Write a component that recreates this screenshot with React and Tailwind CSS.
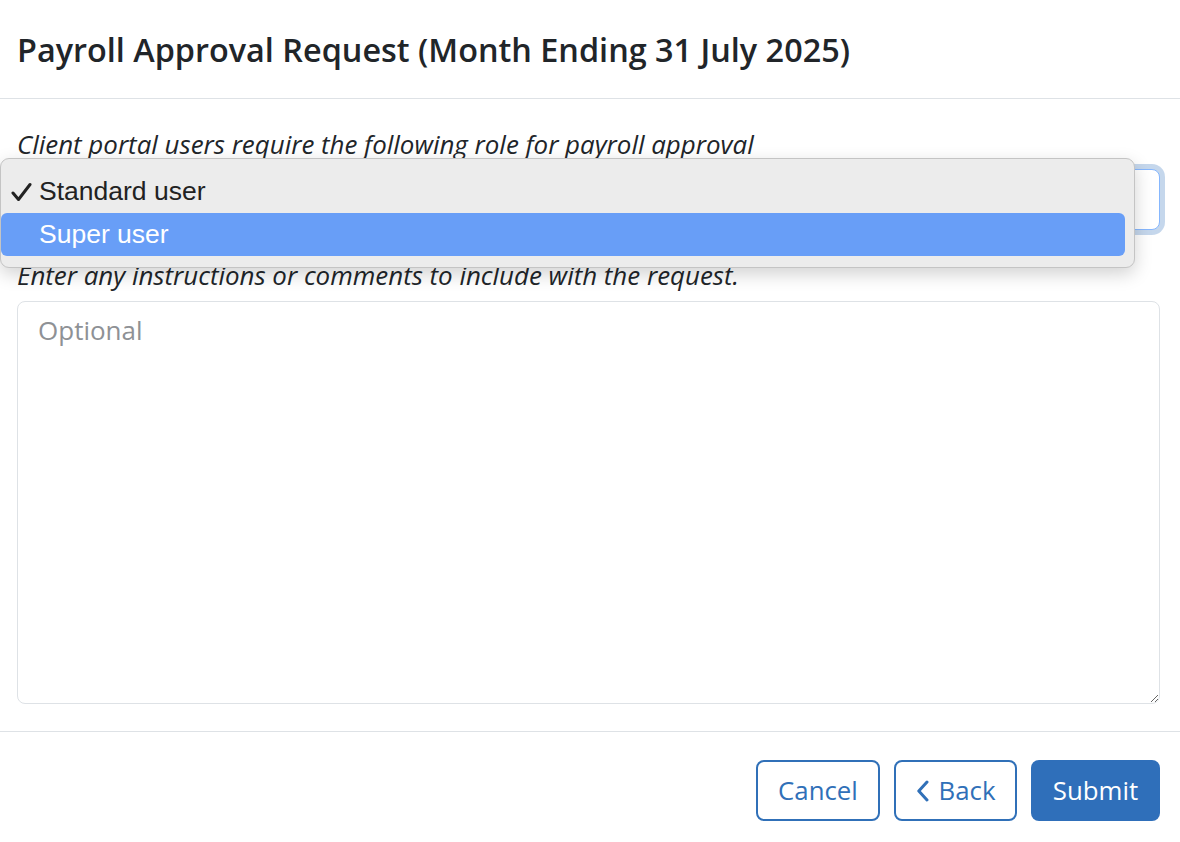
import { useState } from 'react';

const roles = ['Standard user', 'Super user'];

function RoleMenu({ selected, active }) {
  return (
    <div className="absolute left-0 top-[158px] z-10 w-[1135px] rounded-[9px] border border-[#c4c4c4] bg-[#ececec] py-[11px] shadow-[0_6px_18px_rgba(0,0,0,0.18)] font-['Liberation_Sans',sans-serif]">
      {roles.map((role) => (
        <div
          key={role}
          className={
            'relative ml-0 mr-[9px] flex h-[43px] items-center rounded-[6px] pl-[38px] text-[26.5px] ' +
            (role === active ? 'bg-[#689ef7] text-white' : 'text-[#222]')
          }
        >
          {role === selected && (
            <svg className="absolute left-[10px] top-[12px]" width="21" height="20" viewBox="0 0 21 20">
              <path d="M2 11 L7.5 17.5 L19 2.5" fill="none" stroke="#222" strokeWidth="3" strokeLinecap="round" strokeLinejoin="round" />
            </svg>
          )}
          {role}
        </div>
      ))}
    </div>
  );
}

export default function App() {
  const [comments, setComments] = useState('');

  return (
    <div className="relative h-[842px] w-[1180px] overflow-hidden bg-white font-['Open_Sans',sans-serif] text-[#212529]">
      <div className="flex h-[99px] items-center border-b border-[#dee2e6] px-[17px]">
        <h1 className="text-[32.4px] font-semibold leading-none">
          Payroll Approval Request (Month Ending 31 July 2025)
        </h1>
      </div>

      <div className="flex flex-col pl-[17px] pr-[20px] pt-[29px]">
        <p className="text-[25.9px] italic leading-[33px] whitespace-nowrap">
          Client portal users require the following role for payroll approval
        </p>
        <div className="mt-[8px] h-[61px] rounded-[8px] border border-[#86b7fe] bg-white shadow-[0_0_0_5px_rgba(47,111,186,0.28)]" />
        <p className="mt-[29px] text-[25.9px] italic leading-[33px] whitespace-nowrap">
          Enter any instructions or comments to include with the request.
        </p>
        <textarea
          value={comments}
          onChange={(e) => setComments(e.target.value)}
          placeholder="Optional"
          className="mt-[9px] h-[403px] w-full resize-y rounded-[8px] border border-[#dee2e6] px-[20px] py-[12px] text-[26px] leading-[33px] outline-none placeholder:text-[#8e9195]"
        />
      </div>

      <div className="mt-[27px] flex justify-end gap-[14px] border-t border-[#dee2e6] px-[20px] pt-[28px]">
        <button className="h-[61px] w-[124px] rounded-[8px] border-2 border-[#3070b8] text-[25.8px] text-[#3070b8]">
          Cancel
        </button>
        <button className="flex h-[61px] w-[123px] items-center justify-center gap-[10px] rounded-[8px] border-2 border-[#3070b8] text-[25.8px] text-[#3070b8]">
          <svg width="13" height="22" viewBox="0 0 13 22">
            <path d="M11 2 L2.8 11 L11 20" fill="none" stroke="#3070b8" strokeWidth="3" strokeLinecap="round" strokeLinejoin="round" />
          </svg>
          Back
        </button>
        <button className="h-[61px] w-[129px] rounded-[8px] bg-[#2f6fba] text-[25.8px] text-white">
          Submit
        </button>
      </div>

      <RoleMenu selected="Standard user" active="Super user" />
    </div>
  );
}
